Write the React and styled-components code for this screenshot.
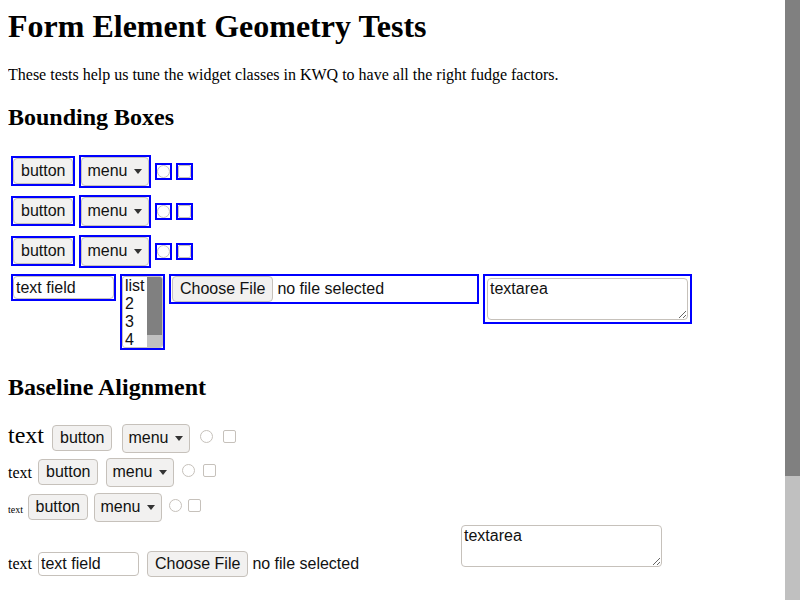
import React from "react";
import styled, { createGlobalStyle, css } from "styled-components";

const GlobalStyle = createGlobalStyle`
  body {
    margin: 8px;
    background: #ffffff;
    color: #000000;
    font-family: "Liberation Serif", "Times New Roman", serif;
    font-size: 16px;
  }
`;

const controlBase = css`
  box-sizing: border-box;
  font-family: "Liberation Sans", Arial, sans-serif;
  font-size: 16px;
  line-height: normal;
  color: #111111;
  border: 1px solid #c6c1bb;
  border-radius: 4px;
  margin: ${(p) => (p.$boxed ? "0" : "0 2px")};
`;

const Title = styled.h1`
  margin: 0 0 0.67em;
  font-size: 32px;
`;

const Intro = styled.p`
  margin: 1em 0;
`;

const SectionTitle = styled.h2`
  margin: 0.83em 0;
  font-size: 24px;
`;

const BoxGrid = styled.div`
  display: flex;
  flex-direction: column;
  gap: 4px;
  padding: 2px 3px 4px;
`;

const BoxRow = styled.div`
  display: flex;
  gap: 4px;
  align-items: ${(p) => (p.$top ? "flex-start" : "center")};
  height: ${(p) => (p.$top ? "auto" : "36px")};
  padding-top: ${(p) => (p.$top ? "1px" : "0")};
`;

const Box = styled.span`
  display: inline-flex;
  border: 2px solid #0000ff;
`;

const Button = styled.button`
  ${controlBase}
  height: 26px;
  padding: 0 7px;
  background: #f2f1f0;
  vertical-align: baseline;
`;

const MenuButton = styled.button`
  ${controlBase}
  display: inline-flex;
  align-items: center;
  gap: 6px;
  height: 29px;
  width: 68px;
  padding: 0 6px 0 5px;
  background: #f2f1f0;
`;

const Caret = styled.span`
  width: 0;
  height: 0;
  border-left: 4.5px solid transparent;
  border-right: 4.5px solid transparent;
  border-top: 5px solid #333333;
`;

const Toggle = styled.input`
  appearance: none;
  box-sizing: border-box;
  width: 13px;
  height: 13px;
  background: #ffffff;
  border: 1px solid #c6c1bb;
  border-radius: ${(p) => (p.type === "radio" ? "50%" : "2px")};
  margin: ${(p) => (p.$boxed ? "0" : "0 2px")};
`;

const TextField = styled.input`
  ${controlBase}
  width: 101px;
  height: ${(p) => (p.$boxed ? "23px" : "24px")};
  padding: 0 2px;
  background: #ffffff;
`;

const ListBox = styled.div`
  ${controlBase}
  display: flex;
  width: 41px;
  height: 72px;
  border-radius: 3px;
  overflow: hidden;
  background: #ffffff;
`;

const ListItems = styled.div`
  flex: 1;
  padding-left: 2px;
  line-height: 18px;
`;

const ListScroll = styled.div`
  display: flex;
  flex-direction: column;
  width: 15px;
  background: #c0c0c0;
`;

const ListThumb = styled.div`
  height: 58px;
  background: #808080;
`;

const FileControl = styled.span`
  display: inline-flex;
  align-items: center;
  gap: 4px;
  width: 306px;
  margin: ${(p) => (p.$boxed ? "0" : "0 2px")};
  font-family: "Liberation Sans", Arial, sans-serif;
  font-size: 16px;
  color: #111111;
`;

const FileButton = styled(Button)`
  margin: 0 0 0 ${(p) => (p.$boxed ? "1px" : "0")};
`;

const TextArea = styled.textarea`
  ${controlBase}
  width: 201px;
  height: 42px;
  padding: 1px 2px;
  background: #ffffff;
  margin: ${(p) => (p.$boxed ? "2px" : "0 2px 2px")};
`;

const AlignRow = styled.div`
  font-size: ${(p) => p.$size}px;
  margin-bottom: ${(p) => p.$after ?? 5}px;
  padding-top: ${(p) => (p.$lead ? "1px" : "0")};
`;

const ScrollTrack = styled.div`
  position: fixed;
  top: 0;
  right: 0;
  width: 15px;
  height: 100vh;
  background: #c0c0c0;
`;

const ScrollThumb = styled.div`
  height: 476px;
  background: #808080;
`;

const Controls = ({ boxed }) => {
  const wrap = (el) => (boxed ? <Box>{el}</Box> : el);
  return (
    <>
      {wrap(<Button type="button" $boxed={boxed}>button</Button>)}{" "}
      {wrap(
        <MenuButton type="button" $boxed={boxed}>
          menu
          <Caret />
        </MenuButton>
      )}{" "}
      {wrap(<Toggle type="radio" $boxed={boxed} />)}{" "}
      {wrap(<Toggle type="checkbox" $boxed={boxed} />)}
    </>
  );
};

const FilePicker = ({ boxed }) => (
  <FileControl $boxed={boxed}>
    <FileButton type="button" $boxed={boxed}>
      Choose File
    </FileButton>
    <span>no file selected</span>
  </FileControl>
);

export default function App() {
  return (
    <>
      <GlobalStyle />
      <Title>Form Element Geometry Tests</Title>
      <Intro>
        These tests help us tune the widget classes in KWQ to have all the
        right fudge factors.
      </Intro>

      <SectionTitle>Bounding Boxes</SectionTitle>
      <BoxGrid>
        {[0, 1, 2].map((i) => (
          <BoxRow key={i}>
            <Controls boxed />
          </BoxRow>
        ))}
        <BoxRow $top>
          <Box>
            <TextField type="text" defaultValue="text field" $boxed />
          </Box>
          <Box>
            <ListBox $boxed>
              <ListItems>
                <div>list</div>
                <div>2</div>
                <div>3</div>
                <div>4</div>
              </ListItems>
              <ListScroll>
                <ListThumb />
              </ListScroll>
            </ListBox>
          </Box>
          <Box>
            <FilePicker boxed />
          </Box>
          <Box>
            <TextArea defaultValue="textarea" $boxed />
          </Box>
        </BoxRow>
      </BoxGrid>

      <SectionTitle>Baseline Alignment</SectionTitle>
      <AlignRow $size={24} $lead>
        text <Controls />
      </AlignRow>
      <AlignRow $size={16}>
        text <Controls />
      </AlignRow>
      <AlignRow $size={10} $lead $after={3}>
        text <Controls />
      </AlignRow>
      <AlignRow $size={16}>
        text <TextField type="text" defaultValue="text field" />{" "}
        <FilePicker /> <TextArea defaultValue="textarea" />
      </AlignRow>

      <ScrollTrack>
        <ScrollThumb />
      </ScrollTrack>
    </>
  );
}
